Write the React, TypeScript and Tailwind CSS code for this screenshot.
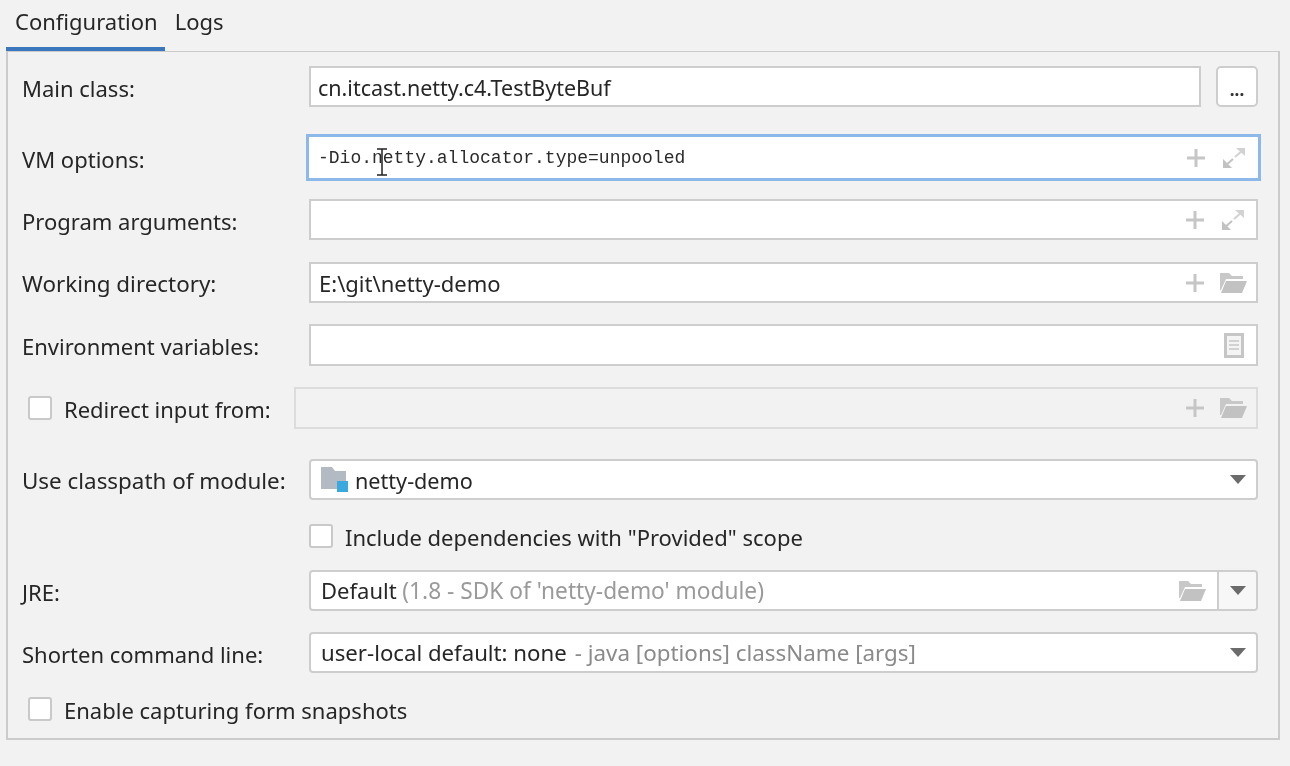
import type { ReactNode } from "react";

const uiFont = "font-['Noto_Sans',sans-serif] text-[22px] leading-[28px] text-[#262626]";

function PlusIcon() {
  return (
    <svg width="18" height="18" viewBox="0 0 18 18" className="shrink-0">
      <path d="M9 0v18M0 9h18" stroke="#c6c6c6" strokeWidth="3" />
    </svg>
  );
}

function ExpandIcon() {
  return (
    <svg width="24" height="22" viewBox="0 0 24 22" className="shrink-0">
      <path d="M13 10l8-7" stroke="#d2d2d2" strokeWidth="2" />
      <path d="M14 1h9v8z" fill="#d2d2d2" />
      <path d="M11 12l-8 7" stroke="#c2c2c2" strokeWidth="2" />
      <path d="M1 12v9h9z" fill="#c2c2c2" />
    </svg>
  );
}

function FolderIcon() {
  return (
    <svg width="27" height="20" viewBox="0 0 27 20" className="shrink-0">
      <path d="M0 0h9l3 3h11v3H6L1 17H0z" fill="#c8c8c8" />
      <path d="M6 8h21l-5 12H1z" fill="#c2c2c2" />
    </svg>
  );
}

function DocIcon() {
  return (
    <svg width="20" height="25" viewBox="0 0 20 25" className="shrink-0">
      <rect x="1.5" y="1.5" width="17" height="22" fill="#f4f4f4" stroke="#c6c6c6" strokeWidth="3" />
      <path d="M5 8h10M5 12h10M5 16h10" stroke="#c6c6c6" strokeWidth="1.5" />
    </svg>
  );
}

function Caret() {
  return (
    <svg width="16" height="9" viewBox="0 0 16 9" className="shrink-0">
      <path d="M0 0h16l-8 9z" fill="#6b6b6b" />
    </svg>
  );
}

function ModuleIcon() {
  return (
    <svg width="28" height="25" viewBox="0 0 28 25" className="shrink-0">
      <path d="M0 0h11l3 4h11v18H0z" fill="#b4bac3" />
      <rect x="16" y="14" width="11" height="11" fill="#3aa9e0" />
    </svg>
  );
}

function Checkbox() {
  return <span className="block h-[24px] w-[24px] shrink-0 rounded-[3px] border-2 border-[#c9c9c9] bg-white" />;
}

function Label({ children }: { children: ReactNode }) {
  return <label className={`w-[287px] shrink-0 pt-[2px] ${uiFont}`}>{children}</label>;
}

function Input({ children, icons, className }: { children?: ReactNode; icons?: ReactNode; className: string }) {
  return (
    <div className={`flex min-w-0 flex-1 items-center justify-between border-2 border-[#cdcdcd] bg-white pl-[8px] ${className}`}>
      <span className={`pt-px ${uiFont}`}>{children}</span>
      {icons}
    </div>
  );
}

function ExpandIcons() {
  return (
    <span className="flex items-center gap-[17px] pr-[11px]">
      <PlusIcon />
      <ExpandIcon />
    </span>
  );
}

function FolderIcons() {
  return (
    <span className="flex items-center gap-[16px] pr-[9px]">
      <PlusIcon />
      <FolderIcon />
    </span>
  );
}

function Select({ children }: { children: ReactNode }) {
  return (
    <div className="flex h-[41px] flex-1 items-center justify-between rounded-[4px] border-2 border-[#cdcdcd] bg-white pl-[10px] pr-[10px]">
      <span className={`flex items-center ${uiFont}`}>{children}</span>
      <Caret />
    </div>
  );
}

export default function App() {
  return (
    <div className="h-[766px] w-[1290px] overflow-hidden bg-[#f2f2f2] blur-[0.4px]">
      <div className="flex h-[47px] items-center gap-[17px] pb-[6px] pl-[15px]">
        <span className={uiFont}>Configuration</span>
        <span className={uiFont}>Logs</span>
      </div>
      <div className="ml-[6px] h-[5px] w-[159px] bg-[#3a77bd]" />
      <div className="relative -mt-px ml-[6px] h-[689px] w-[1274px] border-2 border-t border-[#cbcbcb] pl-[14px] pr-[20px]">
        <div className="mt-[14px] flex h-[41px] items-center">
          <Label>Main class:</Label>
          <Input className="h-[41px]">
            <span className="-ml-px text-[21.5px]">cn.itcast.netty.c4.TestByteBuf</span>
          </Input>
          <button className="ml-[15px] h-[41px] w-[42px] rounded-[5px] border-2 border-[#cdcdcd] bg-white pt-[6px] font-['Noto_Sans',sans-serif] text-[17px] font-bold text-[#333]">
            ...
          </button>
        </div>

        <div className="mt-[30px] flex h-[41px] items-center">
          <Label>VM options:</Label>
          <div className="-mx-[3px] flex h-[47px] min-w-0 flex-1 items-center justify-between border-[3px] border-[#8cb8ea] bg-white pl-[9px]">
            <span className="font-['Liberation_Mono',monospace] text-[18px] leading-[24px] text-[#2b2b2b]">-Dio.netty.allocator.type=unpooled</span>
            <span className="flex items-center gap-[17px] pr-[12px]">
              <PlusIcon />
              <ExpandIcon />
            </span>
          </div>
          <svg width="12" height="28" viewBox="0 0 12 28" className="absolute left-[368px] top-[96px]">
            <path d="M1 1h10M1 27h10M6 1v26" stroke="#222" strokeWidth="1.5" fill="none" />
          </svg>
        </div>

        <div className="mt-[21px] flex h-[41px] items-center">
          <Label>Program arguments:</Label>
          <Input className="h-[41px]" icons={<ExpandIcons />} />
        </div>

        <div className="mt-[22px] flex h-[41px] items-center">
          <Label>
            <span className="text-[22.4px]">Working directory:</span>
          </Label>
          <Input className="h-[41px]" icons={<FolderIcons />}>E:\git\netty-demo</Input>
        </div>

        <div className="mt-[21px] flex h-[42px] items-center">
          <Label>Environment variables:</Label>
          <Input className="h-[42px] pr-[12px]" icons={<DocIcon />} />
        </div>

        <div className="mt-[21px] flex h-[42px] items-center">
          <span className="ml-[6px] mr-[12px]">
            <Checkbox />
          </span>
          <span className={`w-[230px] shrink-0 pt-[2px] ${uiFont}`}>Redirect input from:</span>
          <div className="flex h-[42px] flex-1 items-center justify-end border-2 border-[#dcdcdc]">
            <FolderIcons />
          </div>
        </div>

        <div className="mt-[30px] flex h-[41px] items-center">
          <Label>
            <span className="text-[22.4px]">Use classpath of module:</span>
          </Label>
          <Select>
            <ModuleIcon />
            <span className="ml-[6px] pt-[2px] text-[21.6px]">netty-demo</span>
          </Select>
        </div>

        <div className="mt-[23px] flex h-[25px] items-center pl-[287px]">
          <Checkbox />
          <span className={`ml-[12px] pt-[2px] ${uiFont} text-[22.2px]`}>Include dependencies with "Provided" scope</span>
        </div>

        <div className="mt-[22px] flex h-[41px] items-center">
          <Label>JRE:</Label>
          <div className="flex h-[41px] flex-1 items-center rounded-[4px] border-2 border-[#cdcdcd] bg-white">
            <span className={`flex-1 pl-[10px] ${uiFont}`}>
              Default <span className="text-[22.7px] text-[#9a9a9a]">(1.8 - SDK of 'netty-demo' module)</span>
            </span>
            <FolderIcon />
            <span className="ml-[11px] flex h-full w-[39px] items-center justify-center rounded-r-[3px] border-l-2 border-[#cdcdcd] bg-[#f7f7f7]">
              <Caret />
            </span>
          </div>
        </div>

        <div className="mt-[21px] flex h-[41px] items-center">
          <Label>Shorten command line:</Label>
          <Select>
            <span className="text-[22.2px]">user-local default: none</span>
            <span className="ml-[8px] text-[22.4px] text-[#8a8a8a]">- java [options] className [args]</span>
          </Select>
        </div>

        <div className="mt-[23px] flex h-[25px] items-center">
          <span className="ml-[6px] mr-[12px]">
            <Checkbox />
          </span>
          <span className={`pt-[2px] ${uiFont}`}>Enable capturing form snapshots</span>
        </div>
      </div>
    </div>
  );
}
